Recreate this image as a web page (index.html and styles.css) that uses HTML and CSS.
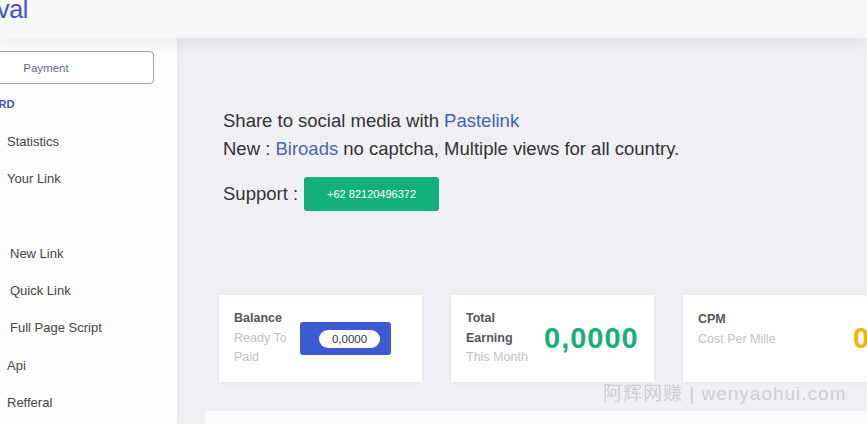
FILE: index.html
```html
<!DOCTYPE html>
<html lang="en">
<head>
    <meta charset="UTF-8">
    <meta name="viewport" content="width=device-width, initial-scale=1.0">
    <title>Pastelink dashboard</title>
    <link rel="stylesheet" href="styles.css">
</head>
<body>
    <header class="topbar">
        <div class="brand">val</div>
    </header>

    <div class="layout">
        <aside class="sidebar">
            <button class="payment-btn">Payment</button>
            <div class="menu-label">DASHBOARD</div>
            <ul class="menu">
                <li class="menu-item">Statistics</li>
                <li class="menu-item">Your Link</li>
                <li class="menu-item menu-empty"></li>
                <li class="menu-item sub">New Link</li>
                <li class="menu-item sub">Quick Link</li>
                <li class="menu-item sub">Full Page Script</li>
                <li class="menu-item">Api</li>
                <li class="menu-item">Refferal</li>
            </ul>
        </aside>

        <main class="main">
            <section class="intro">
                <p>Share to social media with <a href="#">Pastelink</a></p>
                <p>New : <a href="#" class="muted-link">Biroads</a> no captcha, Multiple views for all country.</p>
                <div class="support">
                    <span>Support :</span>
                    <button class="support-btn">+62 82120496372</button>
                </div>
            </section>

            <section class="cards">
                <div class="card">
                    <div class="card-text">
                        <div class="card-title">Balance</div>
                        <div class="card-sub">Ready To</div>
                        <div class="card-sub">Paid</div>
                    </div>
                    <div class="balance-box">
                        <span class="balance-pill">0,0000</span>
                    </div>
                </div>
                <div class="card">
                    <div class="card-text narrow">
                        <div class="card-title">Total</div>
                        <div class="card-title">Earning</div>
                        <div class="card-sub">This Month</div>
                    </div>
                    <div class="big-value green">0,0000</div>
                </div>
                <div class="card card-wide">
                    <div class="card-text wide">
                        <div class="card-title">CPM</div>
                        <div class="card-sub">Cost Per Mille</div>
                    </div>
                    <div class="big-value orange">0,0000</div>
                </div>
            </section>

            <section class="panel"></section>

            <div class="watermark">阿辉网赚 | wenyaohui.com</div>
        </main>
    </div>
</body>
</html>
```
FILE: styles.css
```css
:root {
    --brand-blue: #3c55c4;
    --link-blue: #3c63b8;
    --green: #14b07c;
    --orange: #f2b400;
    --bg: #f0f0f4;
    --text-dark: #333;
    --text-grey: #c2c2c8;
}

* {
    margin: 0;
    padding: 0;
    box-sizing: border-box;
}

body {
    font-family: 'Liberation Sans', Arial, sans-serif;
    background: var(--bg);
    color: var(--text-dark);
    overflow: hidden;
    height: 424px;
}

.topbar {
    position: relative;
    z-index: 2;
    height: 38px;
    background: #f8f8fb;
    box-shadow: 0 4px 20px rgba(0, 0, 0, 0.08);
    overflow: hidden;
}

.brand {
    font-size: 25px;
    line-height: 25px;
    color: var(--brand-blue);
    margin-top: -3px;
    margin-left: -3px;
    letter-spacing: -0.3px;
}

.layout {
    display: flex;
    height: 386px;
}

.sidebar {
    width: 177px;
    flex-shrink: 0;
    background: #fdfdfd;
    box-shadow: 2px 0 8px rgba(0, 0, 0, 0.04);
    position: relative;
    z-index: 1;
    overflow: hidden;
}

.payment-btn {
    display: block;
    margin: 13px 0 0 -62px;
    width: 216px;
    height: 33px;
    background: #fff;
    border: 1px solid #97a1bd;
    border-radius: 4px;
    color: #5d6a98;
    font-family: inherit;
    font-size: 11.5px;
}

.menu-label {
    margin: 12px 0 0 -57px;
    height: 16px;
    line-height: 16px;
    font-size: 11px;
    font-weight: bold;
    color: var(--brand-blue);
}

.menu {
    list-style: none;
    margin-top: 11px;
}

.menu-item {
    height: 37.3px;
    line-height: 37.3px;
    padding-left: 7px;
    font-size: 13px;
    color: #444;
}

.menu-item.sub {
    padding-left: 10px;
}

.main {
    flex: 1;
    position: relative;
    padding-top: 69px;
    overflow: hidden;
}

.intro {
    padding-left: 46px;
    font-size: 18.5px;
    line-height: 28px;
    color: #333;
}

.intro a {
    color: var(--link-blue);
    text-decoration: none;
}

.intro .muted-link {
    color: #4a67b0;
}

.support {
    display: flex;
    align-items: center;
    margin-top: 14px;
    height: 34px;
    gap: 6px;
}

.support-btn {
    height: 34px;
    width: 135px;
    background: var(--green);
    color: #fff;
    border: none;
    border-radius: 3px;
    font-family: inherit;
    font-size: 11px;
}

.cards {
    display: flex;
    gap: 29px;
    margin-top: 84px;
    padding-left: 42px;
}

.card {
    flex-shrink: 0;
    width: 203px;
    height: 87px;
    background: #fff;
    box-shadow: 0 1px 4px rgba(0, 0, 0, 0.05);
    padding-left: 15px;
    display: flex;
    align-items: center;
}

.card-wide {
    width: 260px;
}

.card-text {
    flex-shrink: 0;
    width: 66px;
    font-size: 12.5px;
    line-height: 19.5px;
    white-space: nowrap;
    overflow: hidden;
}

.card-text.narrow {
    width: 68px;
    margin-right: 10px;
}

.card-text.wide {
    width: 155px;
    margin-bottom: 18px;
}

.card-title {
    color: #555;
    font-weight: bold;
}

.card-sub {
    color: var(--text-grey);
}

.balance-box {
    width: 91px;
    height: 33px;
    background: #3d5ad3;
    border-radius: 3px;
    display: flex;
    align-items: center;
    justify-content: flex-end;
    padding-right: 11px;
}

.balance-pill {
    width: 61px;
    height: 18px;
    line-height: 18px;
    background: #fff;
    border-radius: 9px;
    text-align: center;
    font-size: 11.5px;
    color: #333;
}

.big-value {
    font-size: 29px;
    font-weight: bold;
    letter-spacing: 1px;
    white-space: nowrap;
}

.green {
    color: var(--green);
}

.orange {
    color: var(--orange);
}

.panel {
    margin: 29px 0 0 28px;
    height: 40px;
    background: #fbfbfc;
}

.watermark {
    position: absolute;
    left: 426px;
    top: 340px;
    font-size: 19px;
    color: rgba(150, 150, 160, 0.4);
    letter-spacing: 1px;
    white-space: nowrap;
    font-family: 'Liberation Sans', 'Noto Sans CJK SC', sans-serif;
}
```
